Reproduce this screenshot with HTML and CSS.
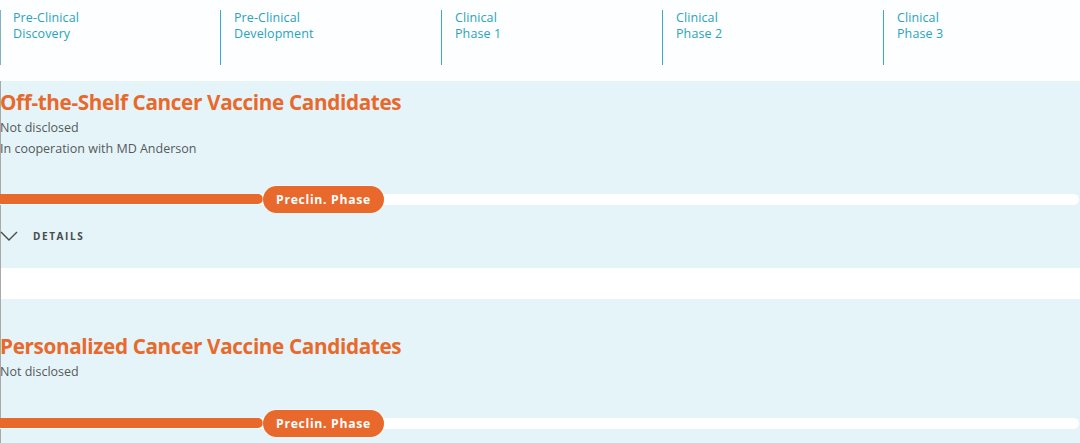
FILE: index.html
```html
<!DOCTYPE html>
<html>
<head>
<meta charset="utf-8">
<link rel="stylesheet" href="styles.css">
</head>
<body>
<div class="page">
  <div class="phases">
    <div class="phase">Pre-Clinical<br>Discovery</div>
    <div class="phase">Pre-Clinical<br>Development</div>
    <div class="phase">Clinical<br>Phase 1</div>
    <div class="phase">Clinical<br>Phase 2</div>
    <div class="phase">Clinical<br>Phase 3</div>
  </div>

  <div class="card card-first">
    <h2 class="title">Off-the-Shelf Cancer Vaccine Candidates</h2>
    <p class="meta">Not disclosed</p>
    <p class="meta">In cooperation with MD Anderson</p>
    <div class="bar">
      <div class="fill" style="width:263px"></div>
      <span class="pill" style="left:263px">Preclin. Phase</span>
    </div>
    <div class="details">
      <svg class="chev" width="18" height="10" viewBox="0 0 18 10"><path d="M1 1 L9 9 L17 1" fill="none" stroke="#4a4a4a" stroke-width="1.4"/></svg>
      <span>DETAILS</span>
    </div>
  </div>

  <div class="card card-second">
    <h2 class="title">Personalized Cancer Vaccine Candidates</h2>
    <p class="meta">Not disclosed</p>
    <div class="bar">
      <div class="fill" style="width:263px"></div>
      <span class="pill" style="left:263px">Preclin. Phase</span>
    </div>
  </div>
</div>
</body>
</html>
```

FILE: styles.css
```css
html, body {
  margin: 0;
  padding: 0;
  background: #ffffff;
  overflow: hidden;
}
body {
  font-family: "Open Sans", "Noto Sans", sans-serif;
  width: 1080px;
  height: 443px;
}
.page {
  border-left: 1px solid #a9a9a9;
  height: 443px;
  box-sizing: border-box;
}
.phases {
  display: grid;
  grid-template-columns: 220px repeat(4, 221px);
  height: 81px;
  padding-top: 10px;
  box-sizing: border-box;
  margin-left: -1px;
  background: #fcfeff;
}
.phase {
  border-left: 1px solid #3aabc2;
  height: 55px;
  padding-left: 13px;
  font-size: 12.5px;
  line-height: 16px;
  color: #2aa3bb;
  letter-spacing: 0.1px;
  box-sizing: border-box;
}
.phase:first-child {
  border-left-color: #7fb4bd;
  padding-left: 12px;
}
.card {
  background: #e5f4f8;
  position: relative;
}
.card-first {
  height: 187px;
  padding-top: 6px;
  box-sizing: border-box;
}
.card-second {
  margin-top: 31px;
  height: 144px;
  padding-top: 32px;
  box-sizing: border-box;
}
.title {
  margin: 0;
  font-size: 20.7px;
  line-height: 30px;
  font-weight: 700;
  color: #e8692b;
  letter-spacing: -0.35px;
  margin-left: -1px;
}
.meta {
  margin: 0;
  font-size: 12.5px;
  line-height: 21px;
  color: #555a5c;
  margin-left: -1px;
}
.bar {
  position: relative;
  height: 11px;
  background: #ffffff;
  border-radius: 0 6px 6px 0;
  margin-left: -1px;
  margin-right: 1px;
}
.card-first .bar { margin-top: 35px; }
.card-second .bar { margin-top: 36px; }
.fill {
  height: 10px;
  margin-top: 1px;
  background: #e8692b;
  border-radius: 0 5px 5px 0;
}
.pill {
  position: absolute;
  top: -8px;
  height: 27px;
  width: 121px;
  border-radius: 14px;
  background: #e8692b;
  color: #ffffff;
  font-size: 12.2px;
  font-weight: 700;
  letter-spacing: 0.7px;
  line-height: 27px;
  text-align: center;
  box-sizing: border-box;
  box-shadow: 0 0 0 1px rgba(255,255,255,0.35);
}
.details {
  display: flex;
  align-items: center;
  gap: 15px;
  margin-top: 24px;
  margin-left: -1px;
}
.chev { display: block; }
.details span {
  font-size: 10px;
  font-weight: 700;
  letter-spacing: 1.6px;
  color: #464a4c;
}
```
